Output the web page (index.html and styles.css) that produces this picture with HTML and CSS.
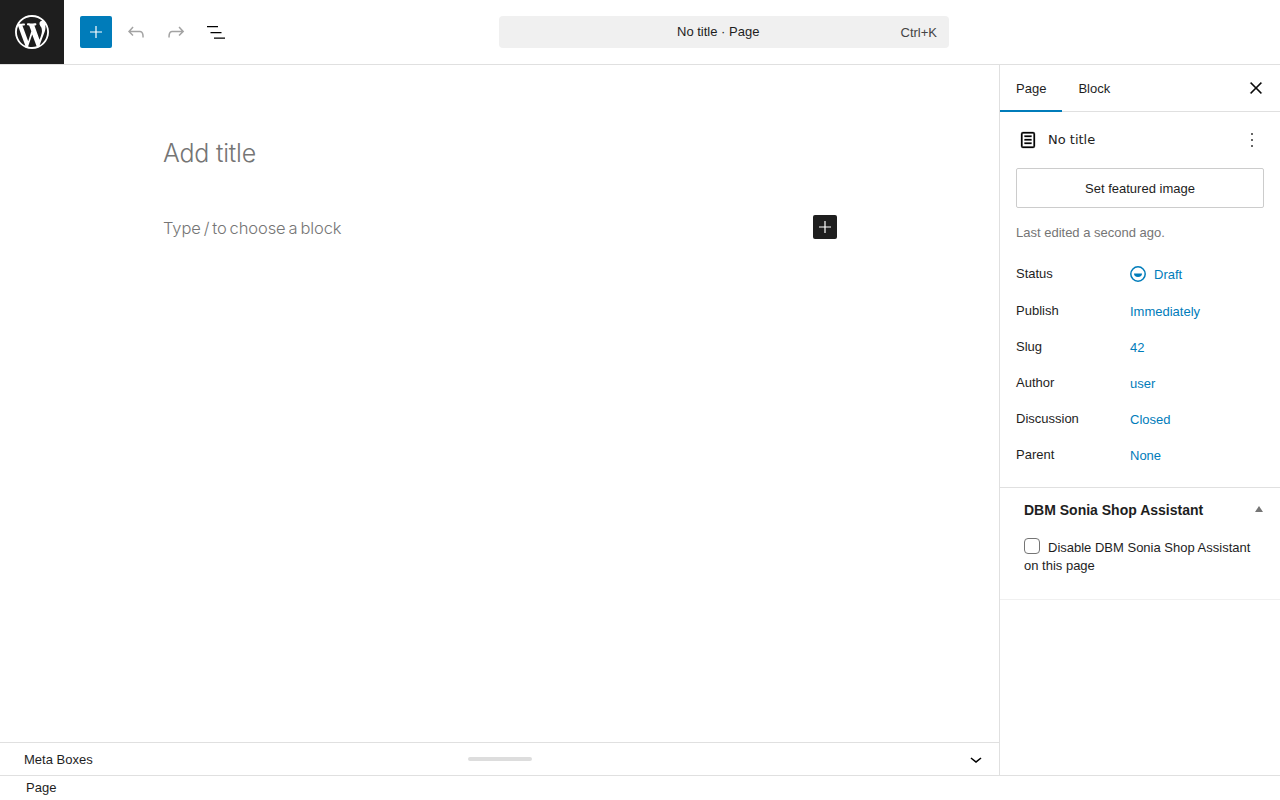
FILE: index.html
```html
<!DOCTYPE html>
<html lang="en">
<head>
<meta charset="utf-8">
<title>Edit Page</title>
<link rel="stylesheet" href="styles.css">
</head>
<body>
<div class="app">
  <header class="topbar">
    <a class="wp-logo"><svg viewBox="0 0 20 20" width="34" height="34"><path fill="#fff" d="M20 10c0-5.51-4.49-10-10-10C4.48 0 0 4.49 0 10c0 5.52 4.48 10 10 10 5.51 0 10-4.48 10-10zM7.78 15.37L4.37 6.22c.55-.02 1.17-.08 1.17-.08.5-.06.44-1.13-.06-1.11 0 0-1.45.11-2.37.11-.18 0-.37 0-.58-.01C4.12 2.69 6.87 1.11 10 1.11c2.33 0 4.45.87 6.05 2.34-.68-.11-1.65.39-1.65 1.58 0 .74.45 1.36.9 2.1.35.61.55 1.36.55 2.46 0 1.49-1.4 5-1.4 5l-3.03-8.37c.54-.02.82-.17.82-.17.5-.05.44-1.25-.06-1.22 0 0-1.44.12-2.38.12-.87 0-2.33-.12-2.33-.12-.5-.03-.56 1.2-.06 1.22l.92.08 1.26 3.41zM17.41 10c.24-.64.74-1.87.43-4.25.7 1.29 1.05 2.71 1.05 4.25 0 3.29-1.73 6.24-4.4 7.78.97-2.59 1.94-5.2 2.92-7.78zM6.1 18.09C3.12 16.65 1.11 13.53 1.11 10c0-1.3.23-2.48.72-3.59C3.25 10.3 4.67 14.2 6.1 18.09zm4.03-6.63l2.58 6.98c-.86.29-1.76.45-2.71.45-.79 0-1.57-.11-2.29-.33.81-2.38 1.62-4.74 2.42-7.1z"/></svg></a>
    <div class="tools">
      <button class="tool tool-primary"><svg viewBox="0 0 24 24" width="24" height="24"><path fill="#fff" d="M11.4 6h1.2v5.4H18v1.2h-5.4V18h-1.2v-5.4H6v-1.2h5.4z"/></svg></button>
      <button class="tool tool-off"><svg viewBox="0 0 24 24" width="24" height="24"><path d="M18.3 11.7c-.6-.6-1.4-.9-2.3-.9H6.7l2.9-3.3-1.1-1-4.5 5L8.5 16l1-1-2.7-2.7H16c.5 0 .9.2 1.3.5 1 1 1 3.4 1 4.5v.3h1.5v-.2c0-1.5 0-4.3-1.5-5.7z"/></svg></button>
      <button class="tool tool-off"><svg viewBox="0 0 24 24" width="24" height="24"><path d="M15.6 6.5l-1.1 1 2.9 3.3H8c-.9 0-1.7.3-2.3.9-1.4 1.5-1.4 4.2-1.4 5.6v.2h1.5v-.3c0-1.1 0-3.5 1-4.5.3-.3.7-.5 1.3-.5h9.2L14.5 15l1.1 1.1 4.6-4.6-4.6-5z"/></svg></button>
      <button class="tool"><svg viewBox="0 0 24 24" width="24" height="24"><path d="M3 6h11v1.2H3V6Zm3.5 6h11v1.2h-11V12ZM21 17.5H10v1.2h11v-1.2Z"/></svg></button>
    </div>
    <div class="command">
      <span class="command-title">No title · Page</span>
      <span class="command-key">Ctrl+K</span>
    </div>
  </header>

  <div class="body">
    <main class="editor">
      <div class="canvas">
        <h1 class="add-title">Add title</h1>
        <div class="block-row">
          <p class="block-hint">Type / to choose a block</p>
          <button class="block-add"><svg viewBox="0 0 24 24" width="24" height="24"><path fill="#fff" d="M11.4 6h1.2v5.4H18v1.2h-5.4V18h-1.2v-5.4H6v-1.2h5.4z"/></svg></button>
        </div>
      </div>
      <div class="meta-bar">
        <span>Meta Boxes</span>
        <span class="grip"></span>
        <svg viewBox="0 0 24 24" width="24" height="24"><path d="M17.5 11.6 12 16l-5.5-4.4.9-1.2L12 14l4.5-3.6 1 1.2z"/></svg>
      </div>
    </main>

    <aside class="sidebar">
      <div class="tabs">
        <button class="tab tab-active">Page</button>
        <button class="tab">Block</button>
        <svg class="tabs-close" viewBox="0 0 24 24" width="18" height="18"><path d="m13.06 12 6.47-6.47-1.06-1.06L12 10.94 5.53 4.47 4.47 5.53 10.94 12l-6.47 6.47 1.06 1.06L12 13.06l6.47 6.47 1.06-1.06L13.06 12Z"/></svg>
      </div>
      <section class="summary">
        <div class="summary-head">
          <svg class="summary-icon" viewBox="0 0 24 24" width="24" height="24"><path d="M15.5 7.5h-7V9h7V7.5Zm-7 3.5h7v1.5h-7V11Zm7 3.5h-7V16h7v-1.5Z"/><path d="M17 4H7a2 2 0 0 0-2 2v12a2 2 0 0 0 2 2h10a2 2 0 0 0 2-2V6a2 2 0 0 0-2-2Zm-10 1.5h10a.5.5 0 0 1 .5.5v12a.5.5 0 0 1-.5.5H7a.5.5 0 0 1-.5-.5V6a.5.5 0 0 1 .5-.5Z"/></svg>
          <span class="summary-name">No title</span>
          <svg class="summary-more" viewBox="0 0 24 24" width="24" height="24"><path d="M12.8 18.8h-1.6v-1.6h1.6v1.6zm0-6h-1.6v-1.6h1.6v1.6zm0-6h-1.6V5.2h1.6v1.6z"/></svg>
        </div>
        <button class="featured">Set featured image</button>
        <p class="edited">Last edited a second ago.</p>
        <dl class="rows">
          <div class="row row-status"><dt>Status</dt><dd><svg class="status-icon" viewBox="0 0 16 16" width="16" height="16"><circle cx="8" cy="8" r="7.2" fill="none" stroke="#007cba" stroke-width="1.5"/><path fill="#007cba" d="M4 7.5h8a4 3.4 0 0 1-8 0Z"/></svg><a>Draft</a></dd></div>
          <div class="row"><dt>Publish</dt><dd><a>Immediately</a></dd></div>
          <div class="row"><dt>Slug</dt><dd><a>42</a></dd></div>
          <div class="row"><dt>Author</dt><dd><a>user</a></dd></div>
          <div class="row"><dt>Discussion</dt><dd><a>Closed</a></dd></div>
          <div class="row"><dt>Parent</dt><dd><a>None</a></dd></div>
        </dl>
      </section>
      <section class="metabox">
        <div class="metabox-head">
          <h2>DBM Sonia Shop Assistant</h2>
          <span class="caret"></span>
        </div>
        <label class="metabox-label"><input type="checkbox" class="check">Disable DBM Sonia Shop Assistant on this page</label>
      </section>
    </aside>
  </div>

  <footer class="statusbar">Page</footer>
</div>
</body>
</html>
```
FILE: styles.css
```css
* { box-sizing: border-box; }
html, body { margin: 0; height: 100%; }
body {
  font-family: "Liberation Sans", Arial, sans-serif;
  font-size: 13px;
  color: #1e1e1e;
  background: #fff;
  overflow: hidden;
}
button { font: inherit; color: inherit; background: none; border: 0; padding: 0; }
svg { display: block; flex: none; }
.app { display: flex; flex-direction: column; height: 800px; }

.topbar { display: flex; height: 65px; border-bottom: 1px solid #e0e0e0; flex: none; position: relative; }
.wp-logo { width: 64px; height: 64px; background: #1e1e1e; display: flex; align-items: center; justify-content: center; }
.tools { display: flex; align-items: center; gap: 8px; margin-left: 16px; }
.tool { width: 32px; height: 32px; display: flex; align-items: center; justify-content: center; border-radius: 2px; }
.tool-primary { background: #007cba; }
.tool-off svg { fill: #a3a3a3; }
.command {
  margin-left: 267px; margin-top: 16px;
  width: 450px; height: 32px;
  background: #f0f0f0; border-radius: 4px;
  display: flex; align-items: center; justify-content: flex-end;
  padding-right: 12px;
  position: relative;
}
.command-title { position: absolute; left: 178px; top: 8px; line-height: 15px; }
.command-key { color: #444; margin-top: 1px; }

.body { flex: 1; display: flex; min-height: 0; }
.editor { flex: 1; display: flex; flex-direction: column; border-right: 1px solid #e0e0e0; min-width: 0; }
.canvas { flex: 1; padding: 72px 162px 0 163px; }
.add-title {
  margin: 0; font-family: Inter, sans-serif; font-weight: 300; font-size: 25px; line-height: 32px;
  color: #757575; letter-spacing: -0.22px;
}
.block-row { display: flex; justify-content: space-between; align-items: center; margin-top: 46px; height: 24px; }
.block-hint { margin: 1px 0 0; font-family: Inter, sans-serif; font-weight: 300; font-size: 16.5px; color: #757575; letter-spacing: -0.1px; word-spacing: -1.6px; }
.block-add { width: 24px; height: 24px; background: #1e1e1e; border-radius: 2px; }

.meta-bar {
  height: 33px; flex: none; border-top: 1px solid #e0e0e0;
  display: flex; align-items: center; justify-content: space-between;
  padding: 0 11px 0 24px; position: relative;
}
.grip { position: absolute; left: 468px; top: 14px; width: 64px; height: 4px; border-radius: 2px; background: #ddd; }

.sidebar { width: 280px; flex: none; }
.tabs { height: 47px; border-bottom: 1px solid #e0e0e0; display: flex; position: relative; }
.tab { height: 47px; padding: 0 16px; }
.tab-active { box-shadow: inset 0 -2px 0 #007cba; }
.tabs-close { margin-left: auto; margin-right: 15px; margin-top: 14px; stroke: #1e1e1e; stroke-width: 0.8; }

.summary { padding: 16px 16px 0; height: 376px; border-bottom: 1px solid #e0e0e0; }
.summary-head { display: flex; align-items: center; height: 24px; margin-bottom: 16px; }
.summary-icon { stroke: #1e1e1e; stroke-width: 0.3; }
.summary-name { font-family: "DejaVu Sans", sans-serif; margin: 0 0 2px 8px; font-size: 13px; }
.summary-more { margin-left: auto; }
.featured { display: block; width: 248px; height: 40px; border: 1px solid #ccc; border-radius: 2px; }
.edited { margin: 17px 0 0; color: #757575; line-height: 16px; }
.rows { margin: 23px 0 0; }
.row { display: grid; grid-template-columns: 114px 1fr; height: 36px; align-items: start; }
.row-status { height: 37px; }
.row dt { line-height: 20px; }
.row dd { margin: 1px 0 0; line-height: 20px; display: flex; align-items: center; gap: 8px; }
.row a { color: #007cba; }
.status-icon { margin-bottom: 2px; }

.metabox { height: 112px; border-bottom: 1px solid #f0f0f0; padding: 14px 17px 0 24px; }
.metabox-head { display: flex; justify-content: space-between; align-items: flex-start; }
.metabox-head h2 { margin: 0; font-size: 14px; line-height: 16px; font-weight: 700; }
.caret { width: 0; height: 0; margin-top: 4px; border: 4px solid transparent; border-top: 0; border-bottom: 6px solid #757575; }
.metabox-label { display: block; margin-top: 20px; line-height: 18px; padding-right: 3px; }
.check {
  appearance: none; width: 16px; height: 16px; margin: 0 8px 0 0; vertical-align: -2px;
  border: 1px solid #757575; border-radius: 4px; background: #fff; display: inline-block;
}

.statusbar { height: 25px; flex: none; border-top: 1px solid #e0e0e0; padding: 4px 26px 0; line-height: 15px; }
```
